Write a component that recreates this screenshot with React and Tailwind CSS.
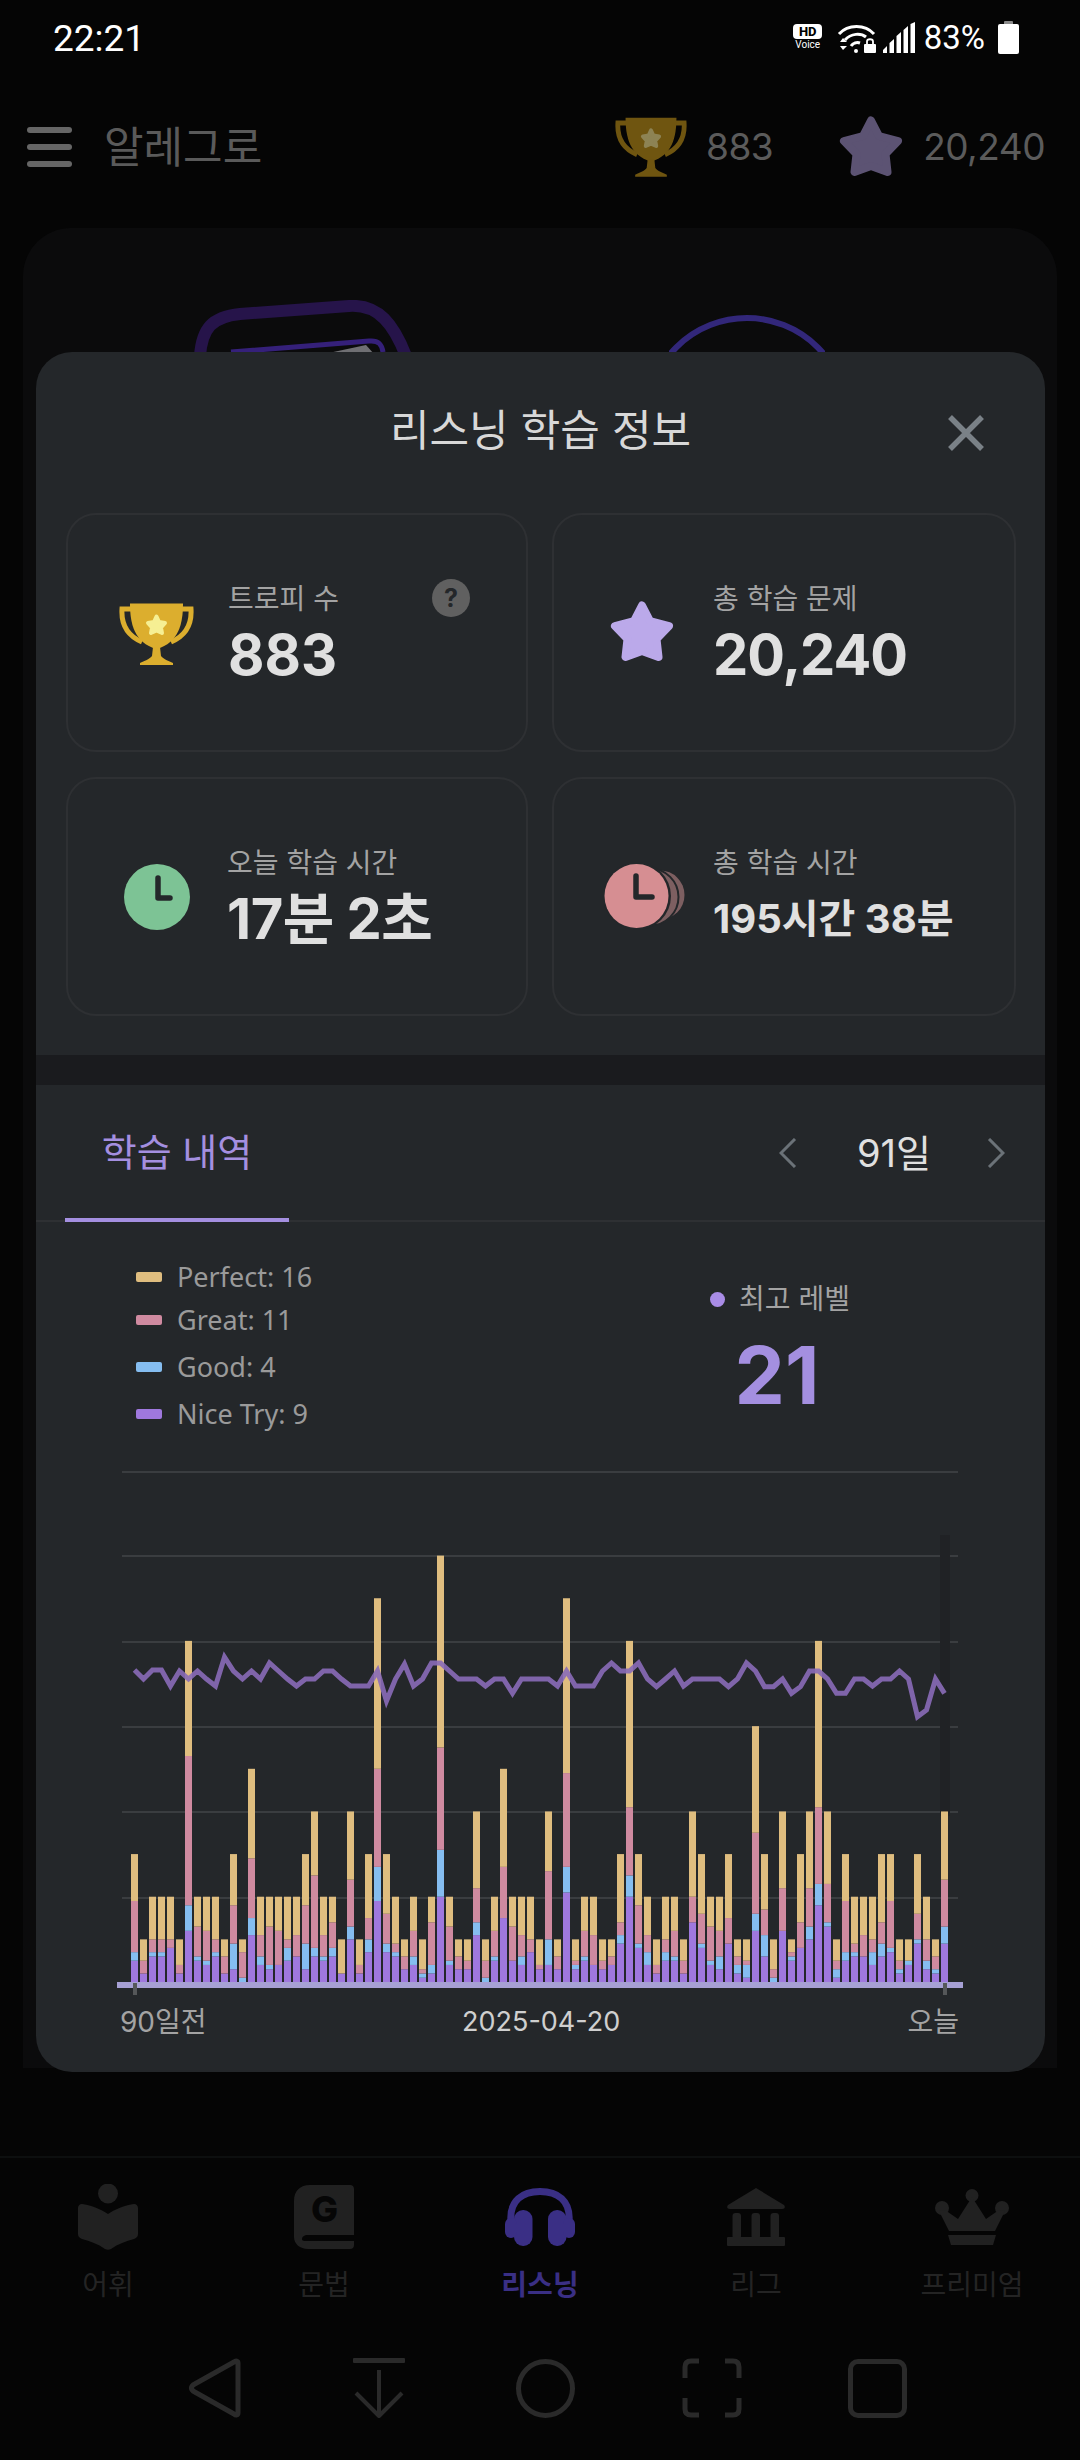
import { useState } from 'react';

const bars = [
  [5,2,12,11],[2,0,3,5],[6,1,3,10],[6,1,3,10],[8,0,2,10],[2,0,2,6],[12,6,35,27],[5,1,7,7],[4,1,7,8],[6,1,3,10],
  [2,0,4,4],[3,6,9,12],[0,1,6,3],[11,4,14,21],[4,2,5,9],[3,1,9,7],[4,0,8,8],[5,3,2,10],[6,0,5,9],[3,6,9,12],
  [6,2,17,15],[5,1,5,9],[6,2,6,6],[2,0,0,8],[10,3,11,16],[2,0,2,6],[7,3,5,15],[19,8,23,40],[7,2,7,14],[6,1,2,11],
  [3,0,3,4],[4,2,6,8],[1,1,1,7],[2,2,10,6],[20,11,24,45],[4,1,8,7],[3,0,3,4],[3,0,2,5],[11,3,8,18],[0,1,4,5],
  [5,1,6,8],[15,0,12,23],[5,0,8,7],[4,2,5,9],[7,0,3,10],[3,0,1,6],[4,6,16,14],[3,0,3,4],[21,6,22,41],[3,1,1,5],
  [5,1,6,8],[4,0,7,9],[3,0,2,5],[4,0,2,4],[9,2,3,16],[20,5,16,39],[8,1,9,12],[4,3,4,9],[2,0,2,6],[5,2,3,10],
  [5,1,6,8],[2,0,3,5],[14,0,6,20],[8,1,7,14],[4,1,8,7],[3,3,6,8],[9,0,6,15],[2,2,2,4],[1,3,1,5],[12,4,19,25],
  [6,5,6,13],[0,1,2,7],[12,0,10,18],[5,1,1,3],[8,0,6,16],[10,3,9,18],[18,5,18,39],[13,1,9,17],[1,2,2,5],[5,2,12,11],
  [6,1,2,11],[6,0,5,9],[4,3,3,10],[6,3,5,16],[7,1,11,11],[2,1,2,5],[4,1,0,5],[9,1,6,14],[3,2,5,10],[2,1,3,4],[9,4,11,16],
];

const line = [
  390,417,390,390,438,393,417,393,417,438,351,393,417,393,417,369,393,417,438,417,417,393,393,417,438,438,438,393,483,417,
  372,438,417,369,369,393,417,417,417,438,417,417,460,417,417,417,417,438,393,438,438,438,393,369,393,393,369,417,440,417,
  393,438,417,417,417,417,440,417,369,393,440,440,417,460,440,393,393,417,460,460,417,417,438,417,417,393,417,530,510,417,460,
];

const segColors = ['#9f78de', '#85bdf0', '#cf8aa0', '#dfbd7f'];
const UNIT = 4.264;

function Star({ color, className }) {
  return (
    <svg viewBox="0 0 64 62" className={className}>
      <polygon points="32,4.500 40,20 59,25 46.500,38 48.500,56 32,50 15.500,56 17.500,38 5,25 24,20" fill={color} stroke={color} strokeWidth="8" strokeLinejoin="round" />
    </svg>
  );
}

function Trophy({ cup, star, className }) {
  return (
    <svg viewBox="0 0 75 62" className={className}>
      <path d="M14 6H3C2 22 9 33 23 39" fill="none" stroke={cup} strokeWidth="5" />
      <path d="M61 6H72C73 22 66 33 52 39" fill="none" stroke={cup} strokeWidth="5" />
      <path d="M11 0.500H64C64 20 60 40 37.500 46C15 40 11 20 11 0.500Z" fill={cup} />
      <path d="M34 44H41L42 53C44 56 50 58 54 60V62H21V60C25 58 31 56 33 53Z" fill={cup} />
      <polygon points="37.500,13.500 40,19 46,20 42,24.500 43,30 37.500,27.500 32,30 33,24.500 29,20 35,19" fill={star} stroke={star} strokeWidth="4" strokeLinejoin="round" />
    </svg>
  );
}

function Clock({ color }) {
  return (
    <svg viewBox="0 0 66 66" className="w-[66px] h-[66px]">
      <circle cx="33" cy="33" r="33" fill={color} />
      <path d="M34 14V34H46" fill="none" stroke="#24272a" strokeWidth="5.500" strokeLinecap="round" strokeLinejoin="round" />
    </svg>
  );
}

function StackClock() {
  return (
    <svg viewBox="0 0 82 66" className="w-[82px] h-[66px]">
      <circle cx="56" cy="31" r="24.500" fill="#7d5f61" />
      <circle cx="46" cy="33" r="28.500" fill="#7d5f61" stroke="#24272a" strokeWidth="2" />
      <circle cx="33" cy="32" r="34" fill="#24272a" />
      <circle cx="32.500" cy="32" r="32" fill="#d68e92" />
      <path d="M32 12V33H48" fill="none" stroke="#24272a" strokeWidth="5.500" strokeLinecap="round" strokeLinejoin="round" />
    </svg>
  );
}

function StatCard({ icon, iconBox, label, value, valueClass, help }) {
  return (
    <div className="relative h-[239px] rounded-[30px] border-2 border-[#2e3033] flex items-center">
      <div className={iconBox}>{icon}</div>
      <div className="flex flex-col pb-[3px]">
        <span className="text-[28px] leading-[40px] text-[#a3a3a3]">{label}</span>
        <span className={valueClass}>{value}</span>
      </div>
      {help && (
        <span className="absolute left-[364px] top-[64px] w-[38px] h-[38px] rounded-full bg-[#606060] flex items-center justify-center text-[25px] font-bold text-[#24272a] leading-none">?</span>
      )}
    </div>
  );
}

function Chart() {
  return (
    <svg viewBox="36 1468 1009 532" className="w-[1009px] h-[532px] block">
      {[1472, 1556, 1642, 1727, 1812, 1898].map((y) => (
        <rect key={y} x="122" y={y - 1} width="836" height="2" fill="#3a3d40" />
      ))}
      <rect x="940" y="1535" width="10" height="281" fill="#202225" />
      {bars.map((b, i) => {
        let bottom = 1982;
        return b.map((v, j) => {
          const h = v * UNIT;
          bottom -= h;
          return v > 0 ? <rect key={`${i}-${j}`} x={131 + i * 9} y={bottom} width="7" height={h} fill={segColors[j]} /> : null;
        });
      })}
      <rect x="117" y="1982" width="846" height="6" fill="#a6a0d4" />
      <rect x="133" y="1983" width="4" height="12" fill="#555759" />
      <rect x="943" y="1983" width="4" height="12" fill="#555759" />
      <polyline
        points={line.map((zy, i) => `${134.5 + i * 9},${1540 + zy / 3}`).join(' ')}
        fill="none"
        stroke="#8a6cb8"
        strokeOpacity="0.9"
        strokeWidth="5"
      />
    </svg>
  );
}

function BookIcon() {
  return (
    <svg viewBox="0 0 60 66" className="w-[60px] h-[66px]">
      <circle cx="30" cy="9.500" r="10" fill="#212121" />
      <path d="M4 20C12 21 23 25 30 30C37 25 48 21 56 20C58.500 20 60 22 60 24V50C60 53 58 54 56 55C48 57 40 60 33 65C31 66 29 66 27 65C20 60 12 57 4 55C2 54 0 53 0 50V24C0 22 1.500 20 4 20Z" fill="#212121" />
    </svg>
  );
}

function GrammarIcon() {
  return (
    <svg viewBox="0 0 60 64" className="w-[60px] h-[64px]">
      <path d="M16 0H56C58.500 0 60 1.500 60 4V50H14C10 50 8 52 8 54C8 56 10 56 14 56H60V60C60 62.500 58.500 64 56 64H14C6 64 0 59 0 52V16C0 6 6 0 16 0Z" fill="#212121" />
      <text x="30.500" y="37" textAnchor="middle" fontSize="36" fontWeight="800" fill="#060606" fontFamily="Inter">G</text>
    </svg>
  );
}

function HeadphonesIcon() {
  return (
    <svg viewBox="0 0 70 58" className="w-[70px] h-[58px]">
      <path d="M6 34C4 12 18 3.500 35 3.500C52 3.500 66 12 64 34" fill="none" stroke="#3a2f85" strokeWidth="7" />
      <rect x="9" y="22" width="18.500" height="36" rx="9" fill="#3a2f85" />
      <rect x="43" y="22" width="18.500" height="36" rx="9" fill="#3a2f85" />
      <rect x="0" y="30" width="12" height="20" rx="6" fill="#3a2f85" />
      <rect x="58" y="30" width="12" height="20" rx="6" fill="#3a2f85" />
    </svg>
  );
}

function BankIcon() {
  return (
    <svg viewBox="0 0 58 58" className="w-[58px] h-[58px]">
      <path d="M29 0L57 17C58.500 19 58 21 55 21H3C0 21 -0.500 19 1 17Z" fill="#212121" />
      <rect x="5.500" y="25" width="8.500" height="26" rx="3" fill="#212121" />
      <rect x="24.500" y="25" width="8.500" height="26" rx="3" fill="#212121" />
      <rect x="43.500" y="25" width="8.500" height="26" rx="3" fill="#212121" />
      <rect x="0" y="49" width="58" height="9" rx="1" fill="#212121" />
    </svg>
  );
}

function CrownIcon() {
  return (
    <svg viewBox="0 0 74 56" className="w-[74px] h-[56px]">
      <circle cx="37" cy="6.500" r="6.500" fill="#212121" />
      <circle cx="7" cy="19" r="7" fill="#212121" />
      <circle cx="67" cy="19" r="7" fill="#212121" />
      <path d="M37 8L51 30L64 21L70 22L60 42H14L4 22L10 21L23 30Z" fill="#212121" />
      <path d="M13 46H61L58 56H16Z" fill="#212121" />
    </svg>
  );
}

function StatusIcons() {
  return (
    <div className="flex items-center">
      <div className="w-[30px] flex flex-col items-center">
        <span className="w-[29px] h-[15px] bg-white rounded-[4px] text-[13px] leading-[15px] font-extrabold text-black text-center font-[Roboto,sans-serif]">HD</span>
        <span className="text-[10px] leading-[12px] text-white font-[Roboto,sans-serif]">Voice</span>
      </div>
      <svg viewBox="0 0 39 31" className="w-[39px] h-[31px] ml-[14px]">
        <path d="M2 12C11 2 28 2 37 12" fill="none" stroke="white" strokeWidth="3" />
        <path d="M8 18C14 11 24 11 29 15" fill="none" stroke="white" strokeWidth="3" />
        <path d="M14 24C16 21 20 20 23 21" fill="none" stroke="white" strokeWidth="3" />
        <circle cx="19" cy="29" r="2" fill="white" />
        <path d="M3 20L6 16L10 20ZM3 24L6 28L10 24Z" fill="white" />
        <rect x="27" y="22" width="12" height="9" rx="1" fill="white" />
        <path d="M30 22V19.500C30 16.500 36 16.500 36 19.500V22" fill="none" stroke="white" strokeWidth="1.800" />
      </svg>
      <svg viewBox="0 0 32 31" className="w-[32px] h-[31px] ml-[7px]">
        <path d="M0 31V28L4 24V31ZM6.500 31V21L11 17V31ZM13.500 31V14L18 10V31ZM20.500 31V8L25 4V31ZM27.500 31V2L32 0V31Z" fill="white" />
      </svg>
      <span className="ml-[9px] text-[33px] leading-none text-white font-[Roboto,sans-serif]">83%</span>
      <div className="ml-[13px] flex flex-col items-center">
        <span className="w-[9px] h-[3px] bg-[#8a8a8a] rounded-t-[1px]" />
        <span className="w-[21px] h-[30px] bg-white rounded-[2px]" />
      </div>
    </div>
  );
}

export default function App() {
  const [range] = useState(91);

  return (
    <main className="relative w-[1080px] h-[2460px] overflow-hidden bg-[#050505] font-[Inter,'Noto_Sans_CJK_KR',sans-serif] flex flex-col">
      <div className="h-[76px] pl-[53px] pr-[61px] pt-[18px] flex items-start justify-between">
        <span className="text-[37px] leading-[42px] text-white font-[Roboto,sans-serif]">22:21</span>
        <div className="pt-[3px]"><StatusIcons /></div>
      </div>

      <header className="h-[152px] pl-[27px] pr-[35px] pb-[10px] flex items-center">
        <div className="flex flex-col gap-[11px] w-[45px]">
          <span className="h-[6px] rounded-full bg-[#666]" />
          <span className="h-[6px] rounded-full bg-[#666]" />
          <span className="h-[6px] rounded-full bg-[#666]" />
        </div>
        <span className="ml-[32px] text-[43px] text-[#5a5a5a]">알레그로</span>
        <div className="ml-auto flex items-center">
          <Trophy cup="#6f5510" star="#8d8354" className="w-[72px] h-[60px]" />
          <span className="ml-[19px] text-[37px] tracking-[-0.5px] text-[#5b5b5b]">883</span>
          <Star color="#5c5373" className="ml-[66px] w-[64px] h-[62px]" />
          <span className="ml-[20px] text-[37px] tracking-[-0.5px] text-[#5b5b5b]">20,240</span>
        </div>
      </header>

      <section className="mx-[23px] h-[1840px] rounded-t-[48px] bg-[#0b0b0c] flex pl-[171px] pt-[72px] gap-[257px]">
        <svg viewBox="0 0 218 60" className="w-[218px] h-[60px]">
          <path d="M6 56C8 28 18 17 46 14L155 6C185 4 200 25 212 56" fill="none" stroke="#26144a" strokeWidth="12" />
          <path d="M37 52L175 41C185 40 188 45 189 52" fill="none" stroke="#35207a" strokeWidth="5" />
          <path d="M130 54L172 45L180 54Z" fill="#6f6f73" />
        </svg>
        <svg viewBox="0 0 156 44" className="w-[156px] h-[44px] mt-[15px]">
          <circle cx="78" cy="103" r="100" fill="none" stroke="#32277a" strokeWidth="6" />
        </svg>
      </section>

      <nav className="absolute left-0 top-[2156px] w-[1080px] h-[304px] bg-[#050505] border-t-2 border-[#0d0f0f]">
        <div className="grid grid-cols-5 pt-[26px]">
          {[
            { label: '어휘', icon: <BookIcon /> },
            { label: '문법', icon: <GrammarIcon /> },
            { label: '리스닝', icon: <HeadphonesIcon />, active: true },
            { label: '리그', icon: <BankIcon /> },
            { label: '프리미엄', icon: <CrownIcon /> },
          ].map((item) => (
            <div key={item.label} className="flex flex-col items-center">
              <div className="h-[66px] flex items-center">{item.icon}</div>
              <span className={item.active ? 'mt-[15px] text-[28px] leading-[40px] font-bold text-[#3a2f85]' : 'mt-[15px] text-[28px] leading-[40px] text-[#242424]'}>{item.label}</span>
            </div>
          ))}
        </div>
        <div className="mt-[53px] h-[60px] flex items-center pl-[189px] gap-[116px]">
          <svg viewBox="0 0 52 60" className="w-[52px] h-[60px]">
            <path d="M49 5C49 3 47 2 45 4L4 27C2 29 2 31 4 33L45 56C47 58 49 57 49 55Z" fill="none" stroke="#2a2a2a" strokeWidth="5" strokeLinejoin="round" />
          </svg>
          <svg viewBox="0 0 52 60" className="w-[52px] h-[60px] -ml-[4px]">
            <rect x="0" y="0" width="52" height="5" rx="1" fill="#2a2a2a" />
            <path d="M26 12V58M3 35L26 58L49 35" fill="none" stroke="#2a2a2a" strokeWidth="4" strokeLinejoin="round" />
          </svg>
          <span className="w-[59px] h-[59px] rounded-full border-[5px] border-[#2a2a2a] -ml-[5px]" />
          <svg viewBox="0 0 60 60" className="w-[60px] h-[60px] -ml-[9px]">
            <path d="M17 3H9C5 3 3 5 3 9V20M43 3H51C55 3 57 5 57 9V20M17 57H9C5 57 3 55 3 51V40M43 57H51C55 57 57 55 57 51V40" fill="none" stroke="#2a2a2a" strokeWidth="5" />
          </svg>
          <span className="w-[59px] h-[59px] rounded-[10px] border-[5px] border-[#2a2a2a] -ml-[10px]" />
        </div>
      </nav>

      {/* bottom sheet, sits over the dimmed page */}
      <div className="absolute left-[36px] top-[352px] w-[1009px] h-[1720px] rounded-[36px] bg-[#24272a] flex flex-col overflow-hidden">
        <div className="relative h-[161px] shrink-0 flex items-start justify-center pt-[55px]">
          <h2 className="text-[43px] leading-[46px] font-normal text-[#d8d8d8]">리스닝 학습 정보</h2>
          <svg viewBox="0 0 38 38" className="absolute left-[911px] top-[62px] w-[38px] h-[38px]">
            <path d="M3 3L35 35M35 3L3 35" stroke="#7a8187" strokeWidth="5.500" />
          </svg>
        </div>

        <div className="grid grid-cols-[462px_464px] gap-x-[24px] gap-y-[25px] pl-[30px] shrink-0">
          <StatCard
            help
            label="트로피 수"
            value="883"
            icon={<Trophy cup="#dcae2e" star="#f6ef93" className="w-[75px] h-[62px]" />}
            iconBox="ml-[51px] mr-[34px] mt-[2px]"
            valueClass="text-[56px] leading-[56px] font-bold text-[#e0e0e0] mt-[8px]"
          />
          <StatCard
            label="총 학습 문제"
            value="20,240"
            icon={<Star color="#bba9ea" className="w-[64px] h-[62px]" />}
            iconBox="ml-[56px] mr-[39px] mb-[2px]"
            valueClass="text-[56px] leading-[56px] font-bold tracking-[-1px] text-[#e0e0e0] mt-[8px]"
          />
          <StatCard
            label="오늘 학습 시간"
            value="17분 2초"
            icon={<Clock color="#7dc395" />}
            iconBox="ml-[56px] mr-[37px]"
            valueClass="text-[56px] leading-[56px] font-bold text-[#e0e0e0] mt-[8px] tracking-[-0.5px]"
          />
          <StatCard
            label="총 학습 시간"
            value="195시간 38분"
            icon={<StackClock />}
            iconBox="ml-[50px] mr-[27px]"
            valueClass="text-[40px] leading-[56px] font-bold text-[#e0e0e0] mt-[8px]"
          />
        </div>

        <div className="h-[30px] mt-[39px] shrink-0 bg-[#1a1b1e]" />

        <div className="relative h-[137px] shrink-0 border-b-2 border-[#2e3033] flex items-center justify-end pr-[40px]">
          <div className="absolute left-[29px] -bottom-[2px] w-[224px] h-[137px] border-b-4 border-[#a48fe0] flex items-center justify-center pt-[2px]">
            <span className="text-[38px] font-normal text-[#a48fe0]">학습 내역</span>
          </div>
          <div className="flex items-center">
            <svg viewBox="0 0 18 30" className="w-[18px] h-[30px]">
              <path d="M16 1L2 15L16 29" fill="none" stroke="#6b7278" strokeWidth="3" />
            </svg>
            <span className="ml-[60px] mr-[56px] text-[38px] leading-[46px] text-[#e0e0e0]">{range}일</span>
            <svg viewBox="0 0 18 30" className="w-[18px] h-[30px]">
              <path d="M2 1L16 15L2 29" fill="none" stroke="#6b7278" strokeWidth="3" />
            </svg>
          </div>
        </div>

        <div className="h-[246px] shrink-0 flex items-start">
          <div className="w-[674px] pl-[100px] pt-[35px] flex flex-col text-[#9a9a9a] font-['Noto_Sans',sans-serif] text-[27px] leading-[40px]">
            <div className="flex items-center gap-[15px]"><span className="w-[26px] h-[10px] rounded-[2px] bg-[#dfbd7f]" />Perfect: 16</div>
            <div className="flex items-center gap-[15px] mt-[3px]"><span className="w-[26px] h-[10px] rounded-[2px] bg-[#cf8aa0]" />Great: 11</div>
            <div className="flex items-center gap-[15px] mt-[7px]"><span className="w-[26px] h-[10px] rounded-[2px] bg-[#85bdf0]" />Good: 4</div>
            <div className="flex items-center gap-[15px] mt-[7px]"><span className="w-[26px] h-[10px] rounded-[2px] bg-[#9f78de]" />Nice Try: 9</div>
          </div>
          <div className="w-[136px] pt-[57px] flex flex-col">
            <div className="flex items-center gap-[14px] text-[28px] leading-[40px] text-[#a3a3a3] whitespace-nowrap">
              <span className="w-[15px] h-[15px] shrink-0 rounded-full bg-[#a98ce6]" />최고 레벨
            </div>
            <div className="mt-[16px] text-center text-[80px] leading-[80px] font-bold text-[#a48fe0] -ml-[2px]">21</div>
          </div>
        </div>

        <Chart />

        <div className="relative flex justify-between pl-[84px] pr-[86px] text-[28px] leading-[40px] mt-[2px] text-[#a3a3a3]">
          <span>90일전</span>
          <span className="absolute left-[426px] text-[27px] text-[#cfcfcf]">2025-04-20</span>
          <span>오늘</span>
        </div>
      </div>
    </main>
  );
}
